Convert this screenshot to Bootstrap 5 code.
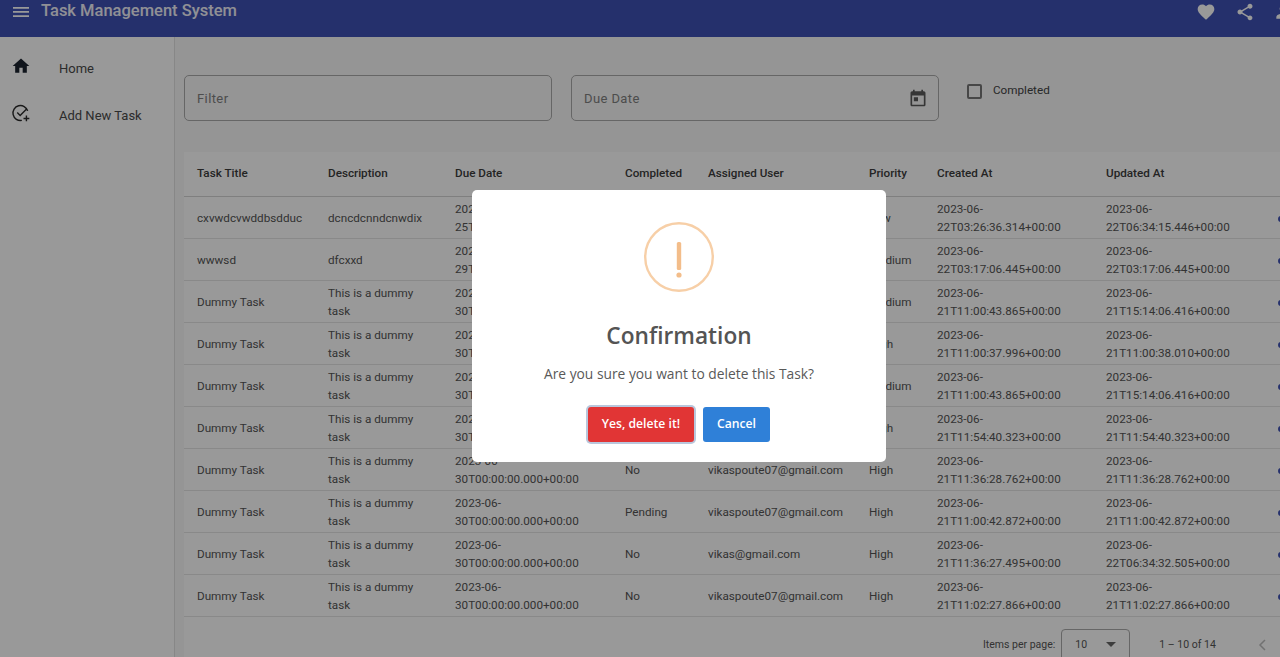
<!DOCTYPE html>
<html lang="en">
<head>
    <meta charset="UTF-8" />
    <title>Task Management System</title>
    <link href="https://cdn.jsdelivr.net/npm/bootstrap@5.3.3/dist/css/bootstrap.min.css" rel="stylesheet">
    <style>
        html, body { height: 100%; overflow: hidden; }
        body { font-family: Roboto, sans-serif; background: #f8f8f8; color: #444; font-size: 11.7px; }

        .top-bar { height: 37px; background: #3f51b5; color: #fff; }
        .top-title { font-size: 16.5px; font-weight: 500; line-height: 20px; margin-left: 12px; opacity: .92; }
        .top-bar svg { fill: #fff; display: block; }
        .top-left { padding: 0 0 16px 13px; }
        .top-left svg { margin-top: 2px; }
        .top-right { padding: 0 0 14px 0; gap: 20px; margin-right: -13px; }
        .top-right svg:first-child { margin-right: -1px; }
        .top-right svg:last-child { margin-left: -2px; }

        .app-body { height: 620px; }
        .side-nav { width: 175px; flex: none; background: #fff; border-right: 1px solid #e2e2e2; padding-top: 8px; }
        .side-link { height: 47px; color: #4a4a4a; font-size: 13px; padding-left: 11px; }
        .side-link svg { width: 20px; height: 20px; margin-right: 28px; margin-top: -5px; }

        .main-area { padding: 38px 0 0 9px; min-width: 0; flex: 1; overflow: hidden; }
        .filter-row { height: 77px; }
        .filter-box { width: 368px; height: 46px; border: 1px solid #aaa; border-radius: 5px; padding: 2px 12px 0; color: #808080; font-size: 13px; letter-spacing: .4px; margin-right: 19px; }
        .filter-box svg { width: 20px; height: 20px; fill: #5a5a5a; margin-right: -2px; margin-top: -3px; }
        .done-check { width: 15px; height: 15px; border: 2px solid #777; border-radius: 2px; margin: 9px 11px 0 9px; }
        .done-label { margin-top: 7px; }

        .task-wrap { width: 1140px; background: #fff; }
        .task-table { table-layout: fixed; width: 1140px; margin: 0; --bs-table-bg: transparent; font-size: 11.7px; color: #555; }
        .task-table th { height: 44px; padding: 0 8px 0 13px; font-weight: 500; color: #3c3c3c; vertical-align: middle; border-bottom: 1px solid #d4d4d4; }
        .task-table td { height: 42px; padding: 1px 8px 0 13px; line-height: 18px; vertical-align: middle; border-bottom: 1px solid #e4e4e4; }
        .row-dot { display: block; width: 6px; height: 6px; border-radius: 50%; background: #3f51b5; margin: 3px 0 0 3px; }

        .pager { width: 1140px; height: 60px; color: #555; font-size: 10.5px; padding: 12px 0 16px 799px; background: #fff; }
        .pager-select { width: 69px; height: 32px; border: 1px solid #aaa; border-radius: 4px 4px 0 0; margin: 0 29px 0 6px; padding: 0 13px; font-size: 10.5px; }
        .pager-arrow { width: 0; height: 0; border-left: 5px solid transparent; border-right: 5px solid transparent; border-top: 5px solid #666; }
        .pager-prev { margin-left: 42px; }

        .dim-layer { position: fixed; inset: 0; background: rgba(0, 0, 0, .4); z-index: 10; }
        .confirm-box { position: absolute; left: 472px; top: 190px; width: 414px; height: 272px; background: #fff; border-radius: 5px; font-family: "Open Sans", sans-serif; padding-top: 32px; }
        .confirm-icon { width: 70px; height: 70px; display: block; }
        .confirm-title { font-size: 22.7px; font-weight: 600; color: #545454; margin: 27px 0 0; line-height: 33px; }
        .confirm-text { font-size: 13.8px; color: #595959; margin: 11px 0 0; line-height: 22px; }
        .confirm-actions { margin-top: 22px; gap: 9px; }
        .btn-yes, .btn-no { height: 35px; border: 0; font-size: 12.2px; font-weight: 600; color: #fff; padding: 0; border-radius: 3px; }
        .btn-yes { background: #e13535; box-shadow: 0 0 0 2px #b9c7dc; width: 106px; }
        .btn-no { background: #2f80d8; width: 67px; }
    </style>
</head>
<body>
<div class="top-bar d-flex align-items-center justify-content-between">
    <div class="top-left d-flex align-items-center">
        <svg width="16" height="10" viewBox="0 0 16 10"><path d="M0 0h16v1.7H0zM0 4.1h16v1.7H0zM0 8.2h16v1.7H0z"/></svg>
        <span class="top-title">Task Management System</span>
    </div>
    <div class="top-right d-flex align-items-center">
        <svg width="20" height="20" viewBox="0 0 24 24"><path d="M12 21.35l-1.45-1.32C5.4 15.36 2 12.28 2 8.5 2 5.42 4.42 3 7.5 3c1.74 0 3.41.81 4.5 2.09C13.09 3.81 14.76 3 16.5 3 19.58 3 22 5.42 22 8.5c0 3.78-3.4 6.86-8.55 11.54L12 21.35z"/></svg>
        <svg width="20" height="20" viewBox="0 0 24 24"><path d="M18 16.08c-.76 0-1.44.3-1.96.77L8.91 12.7c.05-.23.09-.46.09-.7s-.04-.47-.09-.7l7.05-4.11c.54.5 1.25.81 2.04.81 1.66 0 3-1.34 3-3s-1.34-3-3-3-3 1.34-3 3c0 .24.04.47.09.7L8.04 9.81C7.5 9.31 6.79 9 6 9c-1.66 0-3 1.34-3 3s1.34 3 3 3c.79 0 1.5-.31 2.04-.81l7.12 4.16c-.05.21-.08.43-.08.65 0 1.61 1.31 2.92 2.92 2.92s2.92-1.31 2.92-2.92-1.31-2.92-2.92-2.92z"/></svg>
        <svg width="20" height="20" viewBox="0 0 24 24"><path d="M12 12c2.21 0 4-1.79 4-4s-1.79-4-4-4-4 1.79-4 4 1.79 4 4 4zm0 2c-2.67 0-8 1.34-8 4v2h16v-2c0-2.66-5.33-4-8-4z"/></svg>
    </div>
</div>

<div class="app-body d-flex">
    <nav class="side-nav">
        <div class="side-link d-flex align-items-center">
            <svg viewBox="0 0 24 24" fill="#1c2430"><path d="M10 20v-6h4v6h5v-8h3L12 3 2 12h3v8z"/></svg>
            <span>Home</span>
        </div>
        <div class="side-link d-flex align-items-center">
            <svg viewBox="0 0 24 24" fill="none" stroke="#2a2a2a" stroke-width="1.7"><path d="M20 9.5A9 9 0 1 0 13 20.9"/><path d="M7.5 11.5l3.5 3.5 8-8"/><path d="M18.5 15v7M15 18.5h7"/></svg>
            <span>Add New Task</span>
        </div>
    </nav>
    <main class="main-area">
        <div class="filter-row d-flex align-items-start">
            <div class="filter-box d-flex align-items-center">Filter</div>
            <div class="filter-box d-flex align-items-center justify-content-between">
                <span>Due Date</span>
                <svg viewBox="0 0 24 24"><path d="M19 4h-1V2h-2v2H8V2H6v2H5c-1.1 0-2 .9-2 2v14c0 1.1.9 2 2 2h14c1.1 0 2-.9 2-2V6c0-1.1-.9-2-2-2zm0 16H5V9h14v11zM7 11h5v5H7z"/></svg>
            </div>
            <div class="done-check"></div>
            <div class="done-label">Completed</div>
        </div>
        <div class="task-wrap">
            <table class="table task-table" id="taskTable">
                <colgroup>
                    <col style="width:131px"><col style="width:127px"><col style="width:170px"><col style="width:83px"><col style="width:161px"><col style="width:68px"><col style="width:169px"><col style="width:169px"><col style="width:62px">
                </colgroup>
                <thead>
                    <tr><th>Task Title</th><th>Description</th><th>Due Date</th><th>Completed</th><th>Assigned User</th><th>Priority</th><th>Created At</th><th>Updated At</th><th></th></tr>
                </thead>
                <tbody></tbody>
            </table>
            <div class="pager d-flex align-items-center">
                <span>Items per page:</span>
                <div class="pager-select d-flex align-items-center justify-content-between"><span>10</span><span class="pager-arrow"></span></div>
                <span>1 – 10 of 14</span>
                <svg class="pager-prev" width="8" height="12" viewBox="0 0 8 12" fill="none" stroke="#bdbdbd" stroke-width="1.5"><path d="M7 1L2 6l5 5"/></svg>
            </div>
        </div>
    </main>
</div>

<div class="dim-layer">
    <div class="confirm-box d-flex flex-column align-items-center text-center">
        <svg class="confirm-icon" viewBox="0 0 70 70">
            <circle cx="35" cy="35" r="33.8" fill="none" stroke="#f7cfa7" stroke-width="2.4"/>
            <rect x="32.8" y="20" width="4.4" height="28" rx="1.5" fill="#f3bd8a"/>
            <circle cx="35" cy="53" r="2.6" fill="#f3bd8a"/>
        </svg>
        <h2 class="confirm-title">Confirmation</h2>
        <p class="confirm-text">Are you sure you want to delete this Task?</p>
        <div class="confirm-actions d-flex">
            <button type="button" class="btn-yes">Yes, delete it!</button>
            <button type="button" class="btn-no">Cancel</button>
        </div>
    </div>
</div>

<script>
    const rows = [
        ["cxvwdcvwddbsdduc", "dcncdcnndcnwdix", "2023-06-25T00:00:00.000+00:00", "No", "vikaspoute07@gmail.com", "Low", "2023-06-22T03:26:36.314+00:00", "2023-06-22T06:34:15.446+00:00"],
        ["wwwsd", "dfcxxd", "2023-06-29T00:00:00.000+00:00", "No", "vikaspoute07@gmail.com", "Medium", "2023-06-22T03:17:06.445+00:00", "2023-06-22T03:17:06.445+00:00"],
        ["Dummy Task", "This is a dummy task", "2023-06-30T00:00:00.000+00:00", "No", "vikaspoute07@gmail.com", "Medium", "2023-06-21T11:00:43.865+00:00", "2023-06-21T15:14:06.416+00:00"],
        ["Dummy Task", "This is a dummy task", "2023-06-30T00:00:00.000+00:00", "No", "vikaspoute07@gmail.com", "High", "2023-06-21T11:00:37.996+00:00", "2023-06-21T11:00:38.010+00:00"],
        ["Dummy Task", "This is a dummy task", "2023-06-30T00:00:00.000+00:00", "No", "vikaspoute07@gmail.com", "Medium", "2023-06-21T11:00:43.865+00:00", "2023-06-21T15:14:06.416+00:00"],
        ["Dummy Task", "This is a dummy task", "2023-06-30T00:00:00.000+00:00", "No", "vikaspoute07@gmail.com", "High", "2023-06-21T11:54:40.323+00:00", "2023-06-21T11:54:40.323+00:00"],
        ["Dummy Task", "This is a dummy task", "2023-06-30T00:00:00.000+00:00", "No", "vikaspoute07@gmail.com", "High", "2023-06-21T11:36:28.762+00:00", "2023-06-21T11:36:28.762+00:00"],
        ["Dummy Task", "This is a dummy task", "2023-06-30T00:00:00.000+00:00", "Pending", "vikaspoute07@gmail.com", "High", "2023-06-21T11:00:42.872+00:00", "2023-06-21T11:00:42.872+00:00"],
        ["Dummy Task", "This is a dummy task", "2023-06-30T00:00:00.000+00:00", "No", "vikas@gmail.com", "High", "2023-06-21T11:36:27.495+00:00", "2023-06-22T06:34:32.505+00:00"],
        ["Dummy Task", "This is a dummy task", "2023-06-30T00:00:00.000+00:00", "No", "vikaspoute07@gmail.com", "High", "2023-06-21T11:02:27.866+00:00", "2023-06-21T11:02:27.866+00:00"]
    ];
    const tbody = document.querySelector("#taskTable tbody");
    rows.forEach(function (r) {
        const tr = document.createElement("tr");
        r.forEach(function (v) {
            const td = document.createElement("td");
            td.textContent = v;
            tr.appendChild(td);
        });
        const last = document.createElement("td");
        last.innerHTML = '<span class="row-dot"></span>';
        tr.appendChild(last);
        tbody.appendChild(tr);
    });
</script>
<script src="https://cdn.jsdelivr.net/npm/bootstrap@5.3.3/dist/js/bootstrap.bundle.min.js"></script>
</body>
</html>
